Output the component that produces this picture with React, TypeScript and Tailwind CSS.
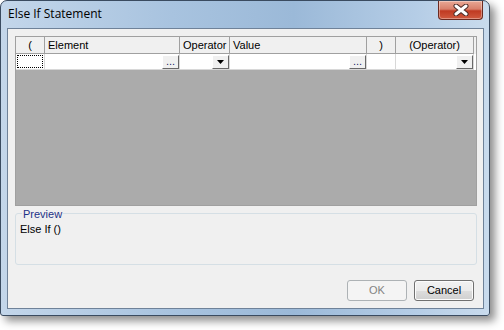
import React from 'react';

const cols = [
    { label: '(', w: 'w-[29px]', center: true },
    { label: 'Element', w: 'w-[135px]' },
    { label: 'Operator', w: 'w-[50px]' },
    { label: 'Value', w: 'w-[137px]' },
    { label: ')', w: 'w-[29px]', center: true },
    { label: '(Operator)', w: 'w-[78px]', center: true },
];

const EllipsisButton = () => (
    <div className="ml-auto w-[17px] h-[14px] bg-[#f0f0f0] border border-t-white border-l-white border-r-[#696969] border-b-[#696969] flex items-end justify-center text-[11px] leading-[11px] text-[#1c1c6c] pb-[1px]">
        ...
    </div>
);

const DropButton = () => (
    <div className="ml-auto w-[17px] h-[14px] bg-[#f0f0f0] border border-t-white border-l-white border-r-[#696969] border-b-[#696969] flex items-center justify-center">
        <svg width="7" height="4" viewBox="0 0 7 4">
            <path d="M0 0 H7 L3.5 4 Z" fill="#000" />
        </svg>
    </div>
);

const CloseButton = () => (
    <div className="absolute right-[6px] top-0 w-[45px] h-[19px] rounded-b-[4px] border border-t-0 border-[#6b2a20] bg-[linear-gradient(#e9a895_0%,#d9806b_45%,#c03a22_55%,#d05a3f_100%)] flex items-center justify-center shadow-[inset_0_0_0_1px_rgba(255,255,255,0.35)]">
        <svg width="16" height="12" viewBox="0 0 16 12">
            <path d="M3 2 L13 10 M13 2 L3 10" stroke="#4a2a26" strokeWidth="5" strokeLinecap="round" />
            <path d="M3 2 L13 10 M13 2 L3 10" stroke="#ffffff" strokeWidth="3" strokeLinecap="round" />
        </svg>
    </div>
);

const App: React.FC = () => {
    return (
        <div className="w-[504px] h-[330px] bg-white" style={{ fontFamily: '"Liberation Sans", Arial, sans-serif' }}>
            <div className="relative w-[490px] h-[316px] rounded-t-[7px] rounded-b-[3px] border border-[#3a4b60] bg-[linear-gradient(90deg,#c3d6ea_0%,#a8c3df_35%,#9bb9d8_60%,#b5cde6_85%,#c9dbed_100%)] flex flex-col shadow-[5px_5px_8px_rgba(0,0,0,0.45)]">
                {/* Title bar */}
                <div className="h-[27px] flex items-center pl-[7px] pb-[1px]">
                    <span className="text-[12px] text-black" style={{ fontFamily: '"Open Sans", "Noto Sans", sans-serif' }}>Else If Statement</span>
                </div>
                <CloseButton />

                {/* Client area */}
                <div className="ml-[6px] mr-[5px] mb-[6px] flex-1 border border-[#6f8299] bg-[#f0f0f0] flex flex-col pl-[7px] pr-[6px] pt-[7px] pb-[7px]">
                    {/* Grid */}
                    <div className="h-[170px] border border-[#a0a0a0] bg-[#ababab] flex flex-col">
                        <div className="flex h-[17px] bg-[#f0f0f0]">
                            {cols.map((c, i) => (
                                <div key={i} className={`${c.w} h-full border-r border-b border-[#a0a0a0] flex items-center text-[11px] text-black ${c.center ? 'justify-center' : 'pl-[3px]'}`}>
                                    {c.label}
                                </div>
                            ))}
                        </div>
                        <div className="flex h-[16px] bg-white">
                            <div className="w-[29px] h-full border-r border-b border-[#d8d8d8] p-[1px]">
                                <div className="w-full h-full border border-dotted border-black" />
                            </div>
                            <div className="w-[135px] h-full border-r border-b border-[#d8d8d8] flex items-center">
                                <EllipsisButton />
                            </div>
                            <div className="w-[50px] h-full border-r border-b border-[#d8d8d8] flex items-center">
                                <DropButton />
                            </div>
                            <div className="w-[137px] h-full border-r border-b border-[#d8d8d8] flex items-center">
                                <EllipsisButton />
                            </div>
                            <div className="w-[29px] h-full border-r border-b border-[#d8d8d8]" />
                            <div className="w-[78px] h-full border-r border-b border-[#d8d8d8] flex items-center">
                                <DropButton />
                            </div>
                        </div>
                    </div>

                    {/* Preview group */}
                    <div className="relative mt-[7px] h-[52px] border border-[#d5dfe5] rounded-[3px] px-[4px] pt-[7px]">
                        <span className="absolute left-[6px] -top-[8px] px-[1px] bg-[#f0f0f0] text-[11px] text-[#1e3287]">Preview</span>
                        <div className="text-[11px] text-black">Else If ()</div>
                    </div>

                    {/* Buttons */}
                    <div className="mt-auto flex justify-end gap-[7px] pr-[3px]">
                        <button className="w-[60px] h-[21px] rounded-[3px] border border-[#adb2b5] bg-[#f4f4f4] text-[11px] text-[#838383]">OK</button>
                        <button className="w-[60px] h-[21px] rounded-[3px] border border-[#707070] bg-[linear-gradient(#f2f2f2_0%,#ebebeb_50%,#dddddd_51%,#cfcfcf_100%)] shadow-[inset_0_0_0_1px_#fcfcfc] text-[11px] text-black">Cancel</button>
                    </div>
                </div>
            </div>
        </div>
    );
};

export default App;
